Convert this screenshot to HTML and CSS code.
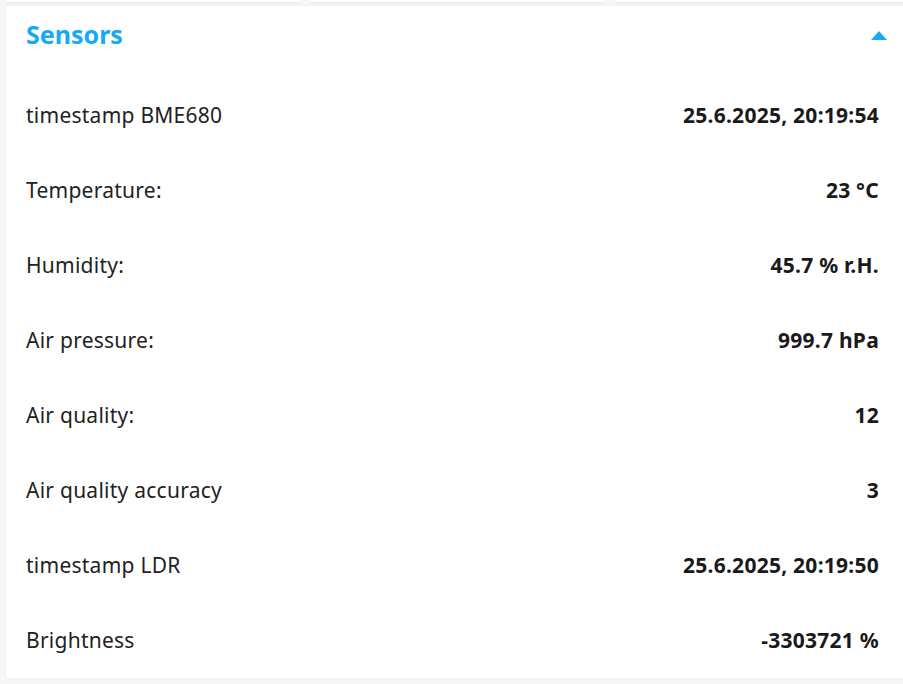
FILE: index.html
```html
<!DOCTYPE html>
<html lang="en">
<head>
<meta charset="utf-8">
<title>Sensors</title>
<link rel="stylesheet" href="styles.css">
</head>
<body>
<div class="top-cards">
  <div class="stub"></div>
  <div class="stub"></div>
  <div class="stub"></div>
</div>
<section class="card">
  <header class="card-head">
    <h2 class="title">Sensors</h2>
    <svg class="caret" width="16" height="9" viewBox="0 0 16 9" aria-hidden="true"><path d="M0 9 L8 0 L16 9 Z" fill="#1aa9f5"/></svg>
  </header>
  <div class="rows">
    <div class="row"><span class="label">timestamp BME680</span><span class="value">25.6.2025, 20:19:54</span></div>
    <div class="row"><span class="label">Temperature:</span><span class="value">23 °C</span></div>
    <div class="row"><span class="label">Humidity:</span><span class="value">45.7 % r.H.</span></div>
    <div class="row"><span class="label">Air pressure:</span><span class="value">999.7 hPa</span></div>
    <div class="row"><span class="label">Air quality:</span><span class="value">12</span></div>
    <div class="row"><span class="label">Air quality accuracy</span><span class="value">3</span></div>
    <div class="row"><span class="label">timestamp LDR</span><span class="value">25.6.2025, 20:19:50</span></div>
    <div class="row"><span class="label">Brightness</span><span class="value">-3303721 %</span></div>
  </div>
</section>
</body>
</html>
```

FILE: styles.css
```css
html, body {
  margin: 0;
  padding: 0;
}
body {
  background: #f7f7f7;
  font-family: "Noto Sans", "Open Sans", sans-serif;
  color: #222;
  overflow: hidden;
  width: 903px;
  height: 684px;
}
.top-cards {
  display: flex;
  gap: 10px;
  padding: 0 0 0 6px;
  height: 2px;
  margin-right: -6px;
}
.stub {
  flex: 1;
  background: #fff;
  box-shadow: 0 1px 3px rgba(0,0,0,0.10);
}
.card {
  margin: 4px -6px 0 6px;
  background: #fff;
  box-shadow: 0 0 3px rgba(0,0,0,0.05);
  padding: 0 30px 0 20px;
  height: 672px;
  box-sizing: border-box;
}
.card-head {
  display: flex;
  justify-content: space-between;
  align-items: center;
  height: 60px;
  padding-bottom: 11px;
}
.title {
  margin: 0;
  font-size: 25px;
  font-weight: 700;
  color: #14aaf5;
  margin-top: -4px;
}
.caret {
  margin-right: -8px;
  margin-top: -2px;
}
.rows {
  display: flex;
  flex-direction: column;
}
.row {
  display: flex;
  justify-content: space-between;
  align-items: center;
  height: 75px;
  font-size: 21px;
  letter-spacing: 0.25px;
}
.label {
  font-weight: 400;
  color: #222;
}
.value {
  font-weight: 700;
  color: #1a1a1a;
}
```
